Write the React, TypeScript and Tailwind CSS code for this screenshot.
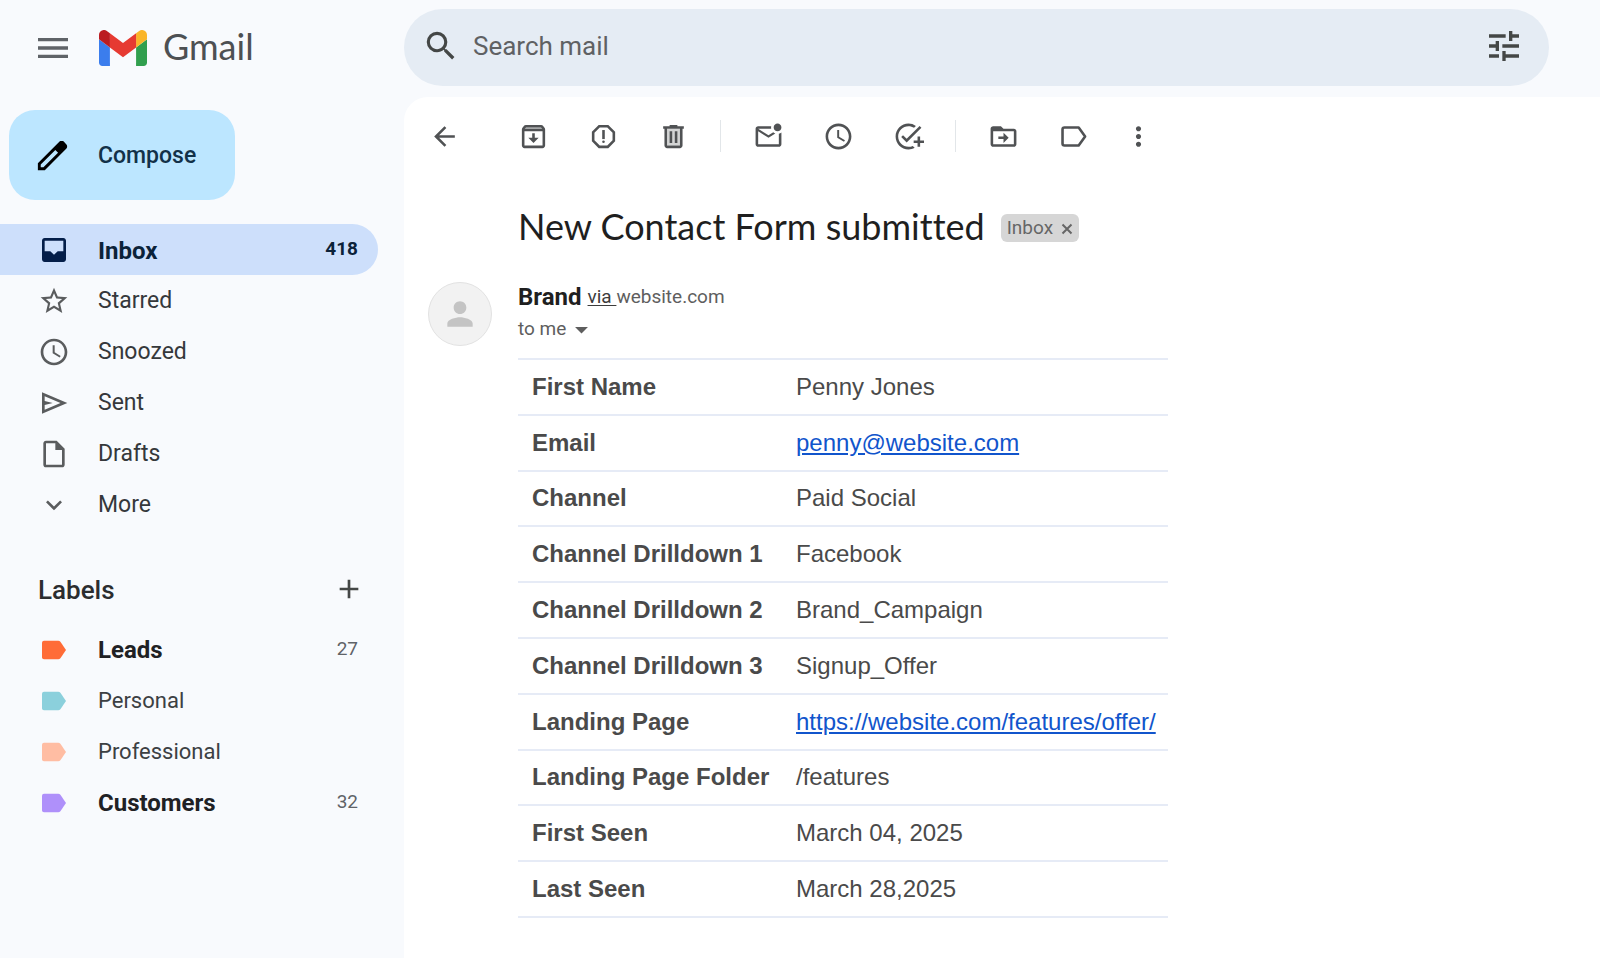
import type { ReactNode } from 'react'
import type { IconType } from 'react-icons'
import {
  MdAccessTime,
  MdAdd,
  MdArrowBack,
  MdArrowDropDown,
  MdExpandMore,
  MdMenu,
  MdMoreVert,
  MdOutlineAddTask,
  MdOutlineInsertDriveFile,
  MdOutlineMarkEmailUnread,
  MdOutlineReportGmailerrorred,
  MdPerson,
  MdSearch,
  MdStarBorder,
  MdTune,
} from 'react-icons/md'

type IconProps = { className?: string }

function GmailLogo() {
  return (
    <svg viewBox="52 42 88 66" className="h-9 w-12 shrink-0" aria-hidden="true">
      <path fill="#3b7ded" d="M58 108h14V74L52 59v43c0 3.32 2.69 6 6 6" />
      <path fill="#319f4e" d="M120 108h14c3.32 0 6-2.69 6-6V59l-20 15" />
      <path fill="#fab529" d="M120 48v26l20-15v-8c0-7.42-8.47-11.65-14.4-7.2" />
      <path fill="#e63a32" d="M72 74V48l24 18 24-18v26L96 92" />
      <path fill="#bb1c21" d="M52 51v8l20 15V48l-5.6-4.2c-5.94-4.45-14.4-.22-14.4 7.2" />
    </svg>
  )
}

function PencilIcon({ className }: IconProps) {
  return (
    <svg viewBox="0 -960 960 960" fill="currentColor" className={className} aria-hidden="true">
      <path d="M190-190h67l360-360-67-67-360 360v67Zm-70 70v-170l528-527q12-11 26.5-17t30.5-6q16 0 31 6t26 18l55 56q12 11 17.5 26t5.5 30q0 16-5.5 30.5T817-647L290-120H120Z" />
    </svg>
  )
}

function InboxIcon({ className }: IconProps) {
  return (
    <svg viewBox="0 0 24 24" fill="currentColor" className={className} aria-hidden="true">
      <path d="M19 3H5c-1.1 0-2 .9-2 2v14c0 1.1.9 2 2 2h14c1.1 0 2-.9 2-2V5c0-1.1-.9-2-2-2zm0 10h-4.2L12 15.6 9.2 13H5V5h14v8z" />
    </svg>
  )
}

function SendIcon({ className }: IconProps) {
  return (
    <svg viewBox="0 -960 960 960" fill="currentColor" className={className} aria-hidden="true">
      <path d="M120-160v-640l760 320-760 320Zm80-120 474-200-474-200v140l240 60-240 60v140Z" />
    </svg>
  )
}

function ArchiveIcon({ className }: IconProps) {
  return (
    <svg viewBox="0 0 24 24" fill="currentColor" className={className} aria-hidden="true">
      <path d="M20.54 5.23l-1.39-1.68C18.88 3.21 18.47 3 18 3H6c-.47 0-.88.21-1.16.55L3.46 5.23C3.17 5.57 3 6.02 3 6.5V19c0 1.1.9 2 2 2h14c1.1 0 2-.9 2-2V6.5c0-.48-.17-.93-.46-1.27zM5 19V8h14v11H5z" fillRule="evenodd" />
      <path d="M6.24 4.8h11.52l1 1.4H5.2z" fill="#a6a8a9" />
      <path d="M11 9.5h2V13h3l-4 4-4-4h3z" />
    </svg>
  )
}

function TrashIcon({ className }: IconProps) {
  return (
    <svg viewBox="0 0 24 24" fill="currentColor" className={className} aria-hidden="true">
      <path d="M7 6h10v13H7z" opacity="0.25" />
      <path d="M15 4V3H9v1H4v2h1v13c0 1.1.9 2 2 2h10c1.1 0 2-.9 2-2V6h1V4h-5zm2 15H7V6h10v13z" />
      <path d="M9 8h2v9H9zM13 8h2v9h-2z" />
    </svg>
  )
}

function MoveIcon({ className }: IconProps) {
  return (
    <svg viewBox="0 0 24 24" fill="currentColor" className={className} aria-hidden="true">
      <path d="M20 6h-8l-2-2H4c-1.1 0-2 .9-2 2v12c0 1.1.9 2 2 2h16c1.1 0 2-.9 2-2V8c0-1.1-.9-2-2-2zm0 12H4V8h16v10z" />
      <path d="M12 9l4 4-4 4v-3H8v-2h4z" />
    </svg>
  )
}

function LabelOutlineIcon({ className }: IconProps) {
  return (
    <svg viewBox="0 0 24 24" fill="none" stroke="currentColor" strokeWidth="2" strokeLinejoin="round" className={className} aria-hidden="true">
      <path d="M5 5h11l5 7-5 7H5c-.8 0-1.5-.7-1.5-1.5v-11C3.5 5.7 4.2 5 5 5z" />
    </svg>
  )
}

function LabelIcon({ className }: IconProps) {
  return (
    <svg viewBox="0 0 24 24" fill="currentColor" className={className} aria-hidden="true">
      <path d="M4.5 5h10.7c.6 0 1.2.3 1.6.8L21 12l-4.2 6.2c-.4.5-1 .8-1.6.8H4.5c-.8 0-1.5-.7-1.5-1.5v-11C3 5.7 3.7 5 4.5 5z" />
    </svg>
  )
}

type NavIcon = IconType | ((props: IconProps) => ReactNode)

const folders: { name: string; icon: NavIcon; count?: number; active?: boolean }[] = [
  { name: 'Inbox', icon: InboxIcon, count: 418, active: true },
  { name: 'Starred', icon: MdStarBorder },
  { name: 'Snoozed', icon: MdAccessTime },
  { name: 'Sent', icon: SendIcon },
  { name: 'Drafts', icon: MdOutlineInsertDriveFile },
  { name: 'More', icon: MdExpandMore },
]

const labels = [
  { name: 'Leads', color: 'text-[#ff6c37]', count: 27, unread: true },
  { name: 'Personal', color: 'text-[#8bd0dc]' },
  { name: 'Professional', color: 'text-[#ffbda3]' },
  { name: 'Customers', color: 'text-[#af90fa]', count: 32, unread: true },
]

const fields: { label: string; value: string; href?: string }[] = [
  { label: 'First Name', value: 'Penny Jones' },
  { label: 'Email', value: 'penny@website.com', href: 'mailto:penny@website.com' },
  { label: 'Channel', value: 'Paid Social' },
  { label: 'Channel Drilldown 1', value: 'Facebook' },
  { label: 'Channel Drilldown 2', value: 'Brand_Campaign' },
  { label: 'Channel Drilldown 3', value: 'Signup_Offer' },
  { label: 'Landing Page', value: 'https://website.com/features/offer/', href: 'https://website.com/features/offer/' },
  { label: 'Landing Page Folder', value: '/features' },
  { label: 'First Seen', value: 'March 04, 2025' },
  { label: 'Last Seen', value: 'March 28,2025' },
]

function Header() {
  return (
    <header className="flex h-[97px] shrink-0 items-start pt-[9px] pr-[51px]">
      <div className="flex h-[77px] w-[404px] shrink-0 items-center pl-[33px]">
        <button type="button" aria-label="Main menu" className="text-[#5f6368]">
          <MdMenu className="size-10" />
        </button>
        <a href="#" className="ml-[26px] flex items-center gap-4">
          <GmailLogo />
          <span className="pb-1 font-[Lato,sans-serif] text-[36px] leading-none text-[#4d5053]">Gmail</span>
        </a>
      </div>
      <form role="search" className="flex h-[77px] min-w-0 flex-1 items-center rounded-full bg-[#e5ecf4] pr-[25px] pb-[3px] pl-[18px] text-[#444746]">
        <button type="button" aria-label="Search">
          <MdSearch className="size-[38px]" />
        </button>
        <input
          type="search"
          aria-label="Search mail"
          placeholder="Search mail"
          className="ml-[13px] min-w-0 flex-1 bg-transparent text-[26px] outline-none placeholder:text-[#5f6163]"
        />
        <button type="button" aria-label="Show search options">
          <MdTune className="size-10" />
        </button>
      </form>
    </header>
  )
}

function Sidebar() {
  return (
    <aside className="flex w-[404px] shrink-0 flex-col pt-[13px]">
      <button
        type="button"
        className="ml-[9px] flex h-[90px] w-[226px] items-center rounded-[26px] bg-[#bce6ff] pl-6 text-[23px] font-medium text-[#123148]"
      >
        <PencilIcon className="size-[39px] text-black" />
        <span className="ml-[26px] pt-0.5">Compose</span>
      </button>

      <nav aria-label="Folders" className="mt-6">
        {folders.map(({ name, icon: Icon, count, active }) => (
          <a
            key={name}
            href="#"
            className={[
              'mr-[26px] flex h-[51px] items-center rounded-r-full pr-5 pl-[38px]',
              active ? 'bg-[#cddffb] text-[24px] font-bold text-[#0b2239]' : 'text-[23px] text-[#35383b]',
            ].join(' ')}
          >
            <Icon className={active ? 'size-8 text-[#041e49]' : 'size-8 text-[#5a5c5e]'} />
            <span className="ml-7 flex-1 pt-0.5">{name}</span>
            {count && <span className="text-[19px]">{count}</span>}
          </a>
        ))}
      </nav>

      <section aria-labelledby="labels-heading" className="mt-6">
        <div className="mr-[26px] flex h-[70px] items-center justify-between pr-[13px] pl-[38px]">
          <h2 id="labels-heading" className="pt-0.5 text-[26px] font-medium text-[#2b2d2f]">Labels</h2>
          <button type="button" aria-label="Create new label" className="text-[#444746]">
            <MdAdd className="size-8" />
          </button>
        </div>
        {labels.map((label) => (
          <a key={label.name} href="#" className="mr-[26px] flex h-[51px] items-center pr-5 pl-[38px] text-[#3c4043]">
            <LabelIcon className={`size-8 ${label.color}`} />
            <span className={label.unread ? 'ml-7 flex-1 text-[24px] font-bold text-[#202124]' : 'ml-7 flex-1 text-[22px]'}>
              {label.name}
            </span>
            {label.count && <span className="text-[19px] text-[#5f6368]">{label.count}</span>}
          </a>
        ))}
      </section>
    </aside>
  )
}

function ToolButton({ label, icon: Icon, className = 'w-[70px]' }: { label: string; icon: NavIcon; className?: string }) {
  return (
    <button type="button" aria-label={label} className={`flex h-12 items-center justify-center ${className}`}>
      <Icon className="size-[31px]" />
    </button>
  )
}

function Divider() {
  return <span className="mx-3 h-8 w-px bg-[#e2e6e9]" />
}

function Toolbar() {
  return (
    <div className="flex h-[78px] items-center pl-[10px] text-[#505254]">
      <ToolButton label="Back" icon={MdArrowBack} className="mr-6 w-[60px]" />
      <ToolButton label="Archive" icon={ArchiveIcon} />
      <ToolButton label="Report spam" icon={MdOutlineReportGmailerrorred} />
      <ToolButton label="Delete" icon={TrashIcon} />
      <Divider />
      <ToolButton label="Mark as unread" icon={MdOutlineMarkEmailUnread} />
      <ToolButton label="Snooze" icon={MdAccessTime} />
      <ToolButton label="Add to tasks" icon={MdOutlineAddTask} />
      <Divider />
      <ToolButton label="Move to" icon={MoveIcon} />
      <ToolButton label="Labels" icon={LabelOutlineIcon} />
      <ToolButton label="More" icon={MdMoreVert} className="w-[60px]" />
    </div>
  )
}

function Message() {
  return (
    <article className="pl-6">
      <div className="flex h-[105px] items-center pl-[90px]">
        <h1 className="pb-1 font-[Lato,sans-serif] text-[36px] leading-none whitespace-nowrap text-[#1f1f1f] [font-variant-ligatures:none]">
          New Contact Form submitted
        </h1>
        <span className="ml-4 flex h-7 items-center gap-2 rounded-md bg-[#d6d6d6] px-[6px] pt-0.5 text-[19px] text-[#666]">
          Inbox
          <button type="button" aria-label="Remove label Inbox" className="leading-none">
            <svg viewBox="0 0 12 12" className="size-3" stroke="currentColor" strokeWidth="2" aria-hidden="true">
              <path d="M1.5 1.5l9 9M10.5 1.5l-9 9" />
            </svg>
          </button>
        </span>
      </div>

      <div className="flex h-[78px] gap-[26px]">
        <span className="mt-[2px] flex size-16 shrink-0 items-center justify-center rounded-full border border-[#e2e2e2] bg-[#f2f2f2] text-[#c4c4c4]">
          <MdPerson className="size-[38px]" />
        </span>
        <div className="pt-px">
          <p className="flex h-8 items-center text-[19px] text-[#5e5e5e]">
            <strong className="mr-[6px] text-[24px] text-[#1f1f1f]">Brand</strong>
            <a href="#" className="whitespace-pre text-[#3c3c3c] underline underline-offset-2">via </a>
            website.com
          </p>
          <button type="button" className="flex h-8 items-center text-[19px] text-[#5e5e5e]">
            to me
            <MdArrowDropDown className="size-[31px]" />
          </button>
        </div>
      </div>

      <table className="ml-[90px] h-[560px] border-collapse border-t-2 border-[#e6ebf6] text-left font-['Liberation_Sans',Arial,sans-serif] text-[24px] text-[#4a4a4a]">
        <tbody>
          {fields.map((field) => (
            <tr key={field.label} className="border-b-2 border-[#e6ebf6]">
              <th scope="row" className="w-[264px] pr-3 pl-[14px] font-bold whitespace-nowrap">{field.label}</th>
              <td className="pr-3 pl-[14px] whitespace-nowrap">
                {field.href ? (
                  <a href={field.href} className="text-[#1155cc] underline">{field.value}</a>
                ) : (
                  field.value
                )}
              </td>
            </tr>
          ))}
        </tbody>
      </table>
    </article>
  )
}

export default function App() {
  return (
    <div className="flex min-h-screen flex-col bg-[#f8fafd] font-[Roboto,'Liberation_Sans',sans-serif]">
      <Header />
      <div className="flex flex-1">
        <Sidebar />
        <main className="min-w-0 flex-1 rounded-tl-[24px] bg-white">
          <Toolbar />
          <Message />
        </main>
      </div>
    </div>
  )
}
